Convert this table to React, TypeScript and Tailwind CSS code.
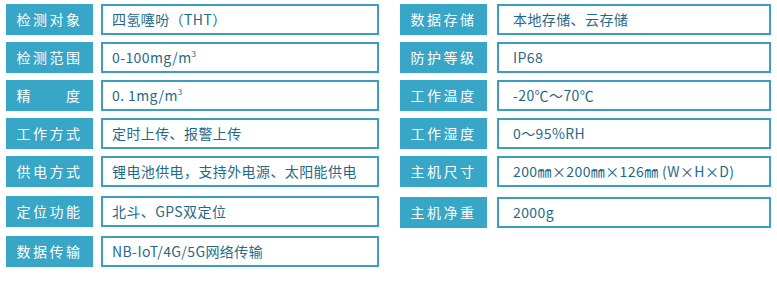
import React from 'react';

type Spec = { label: string; value: React.ReactNode; extra?: string };

const left: Spec[] = [
  { label: '检测对象', value: '四氢噻吩（THT）' },
  { label: '检测范围', value: <>0-100mg/m<sup className="text-[8px]">3</sup></> },
  { label: '精　　度', value: <>0. 1mg/m<sup className="text-[8px]">3</sup></> },
  { label: '工作方式', value: '定时上传、报警上传' },
  { label: '供电方式', value: '锂电池供电，支持外电源、太阳能供电' },
  { label: '定位功能', value: '北斗、GPS双定位', extra: 'mt-[2px]' },
  { label: '数据传输', value: 'NB-IoT/4G/5G网络传输', extra: 'mt-[2px]' },
];

const right: Spec[] = [
  { label: '数据存储', value: '本地存储、云存储' },
  { label: '防护等级', value: 'IP68' },
  { label: '工作温度', value: '-20℃～70℃' },
  { label: '工作湿度', value: '0～95%RH' },
  { label: '主机尺寸', value: '200㎜×200㎜×126㎜ (W×H×D)' },
  { label: '主机净重', value: '2000g', extra: 'mt-[3px]' },
];

const Row = ({ label, value, extra, gap, pad }: Spec & { gap: string; pad: string }) => (
  <div className={`flex h-[31px] ${gap} ${extra ?? ''}`}>
    <div className="w-[87px] shrink-0 bg-[#37a6c7] flex items-center justify-center text-white text-[14px] tracking-[2.5px] whitespace-pre">
      {label}
    </div>
    <div className={`flex-1 border-2 border-[#3c9ebd] bg-white flex items-center ${pad} text-[#1f6a89] text-[14px] tracking-[0.4px] whitespace-nowrap`}>
      {value}
    </div>
  </div>
);

export default function App() {
  return (
    <div className="w-[777px] h-[289px] bg-white flex pt-[4px] pl-[6px] font-['Noto_Sans_CJK_SC','Noto_Sans',sans-serif]">
      {/* left column */}
      <div className="w-[373px] flex flex-col gap-[7px]">
        {left.map((r) => (
          <Row key={r.label} {...r} gap="gap-[8px]" pad="pl-[9px]" />
        ))}
      </div>
      {/* right column */}
      <div className="w-[371px] ml-[21px] flex flex-col gap-[7px]">
        {right.map((r) => (
          <Row key={r.label} {...r} gap="gap-[10px]" pad="pl-[14px]" />
        ))}
      </div>
    </div>
  );
}
